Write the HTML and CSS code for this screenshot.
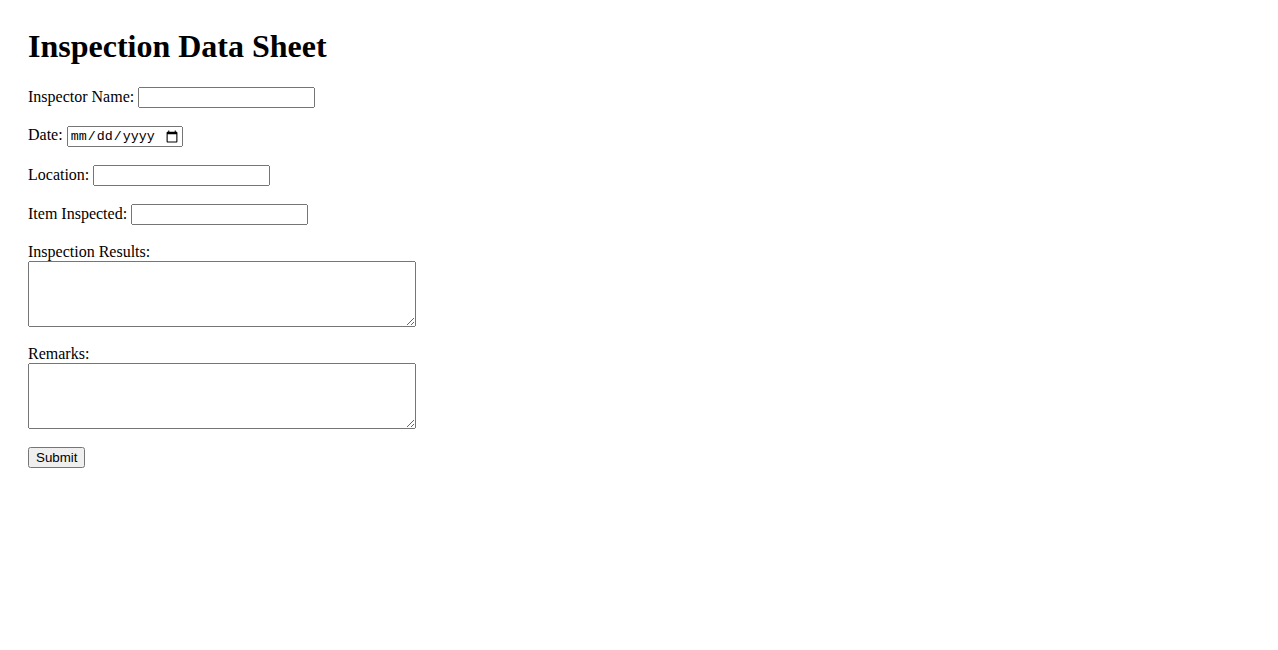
FILE: index.html
```html
<!DOCTYPE html>
<html lang="en">
<head>
  <meta charset="UTF-8" />
  <meta name="viewport" content="width=device-width, initial-scale=1.0" />
  <title>Inspection Data Sheet</title>
  <link rel="stylesheet" href="styles.css">
</head>
<body>
  <h1>Inspection Data Sheet</h1>
  <form id="inspectionForm">
    <label for="inspectorName">Inspector Name:</label>
    <input type="text" id="inspectorName" name="inspectorName" class="field" />
    <br><br>
    <label for="date">Date:</label>
    <input type="date" id="date" name="date" class="date-field" />
    <br><br>
    <label for="location">Location:</label>
    <input type="text" id="location" name="location" class="field" />
    <br><br>
    <label for="item">Item Inspected:</label>
    <input type="text" id="item" name="item" class="field" />
    <br><br>
    <label for="results">Inspection Results:</label><br>
    <textarea id="results" name="results" class="notes"></textarea>
    <br><br>
    <label for="remarks">Remarks:</label><br>
    <textarea id="remarks" name="remarks" class="notes"></textarea>
    <br><br>
    <button type="submit" class="submit-btn">Submit</button>
  </form>
</body>
</html>
```

FILE: styles.css
```css
body {
  font-family: "Liberation Serif", "Times New Roman", serif;
  font-size: 16px;
  margin: 8px;
  padding: 20px;
  background: #fff;
  color: #000;
}
h1 {
  font-size: 32px;
  margin: 0 0 22.4px 0;
}
.field {
  width: 177px;
  height: 21px;
  box-sizing: border-box;
  font-family: "Liberation Sans", Arial, sans-serif;
  font-size: 13.33px;
}
.date-field {
  width: 116px;
  height: 21px;
  box-sizing: border-box;
  font-family: "Liberation Mono", monospace;
  font-size: 13.33px;
}
.notes {
  width: 388px;
  height: 66px;
  box-sizing: border-box;
  vertical-align: bottom;
  font-family: "Liberation Mono", monospace;
  font-size: 13.33px;
}
.submit-btn {
  font-family: "Liberation Sans", Arial, sans-serif;
  font-size: 13.33px;
  height: 21px;
  padding: 1px 6px;
}
```
